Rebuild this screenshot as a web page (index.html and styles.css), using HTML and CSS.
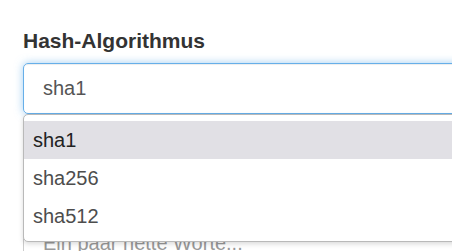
FILE: index.html
```html
<!DOCTYPE html>
<html lang="de">
<head>
  <meta charset="UTF-8" />
  <meta name="viewport" content="width=device-width, initial-scale=1" />
  <link rel="stylesheet" href="styles.css">
</head>
<body>

  <div class="form">
    <div class="group">
      <label class="label" for="algo">Hash-Algorithmus</label>
      <div class="select-wrap">
        <div class="select" id="algo">sha1</div>
        <ul class="options">
          <li class="option active">sha1</li>
          <li class="option">sha256</li>
          <li class="option">sha512</li>
        </ul>
      </div>
    </div>

    <div class="group">
      <textarea class="text" placeholder="Ein paar nette Worte..."></textarea>
    </div>
  </div>

</body>
</html>
```

FILE: styles.css
```css
html, body {
  overflow: hidden;
}

body {
  margin: 0;
  font-family: "Liberation Sans", Arial, sans-serif;
  background-color: #fff;
  color: #333;
}

.form {
  width: 580px;
  padding: 28px 0 0 23px;
}

.label {
  display: block;
  font-size: 21px;
  line-height: 25px;
  font-weight: bold;
  color: #333;
  margin-bottom: 10px;
}

.select-wrap {
  position: relative;
}

.select {
  box-sizing: border-box;
  height: 51px;
  padding: 0 19px;
  font-size: 20px;
  line-height: 49px;
  color: #555;
  border: 1px solid #66afe9;
  border-radius: 5px;
  box-shadow: inset 0 1px 1px rgba(0,0,0,0.075), 0 0 8px rgba(102,175,233,0.6);
}

.options {
  position: absolute;
  top: 51px;
  left: 0;
  right: 0;
  margin: 0;
  padding: 6px 0;
  list-style: none;
  background-color: #fff;
  border: 1px solid #b9b9b9;
  border-radius: 5px;
  box-shadow: 0 2px 5px rgba(0,0,0,0.15);
  z-index: 2;
}

.option {
  height: 38px;
  line-height: 38px;
  padding-left: 9px;
  font-size: 20px;
  color: #4d4d4d;
}

.option.active {
  background-color: #e1e0e5;
  color: #222;
}

.text {
  display: block;
  box-sizing: border-box;
  width: 100%;
  height: 120px;
  margin-top: 104px;
  padding: 10px 19px;
  font-family: "Liberation Sans", Arial, sans-serif;
  font-size: 20px;
  line-height: 28px;
  color: #555;
  border: 1px solid #ccc;
  border-radius: 5px;
  resize: none;
}

.text::placeholder {
  color: #999;
}
```
